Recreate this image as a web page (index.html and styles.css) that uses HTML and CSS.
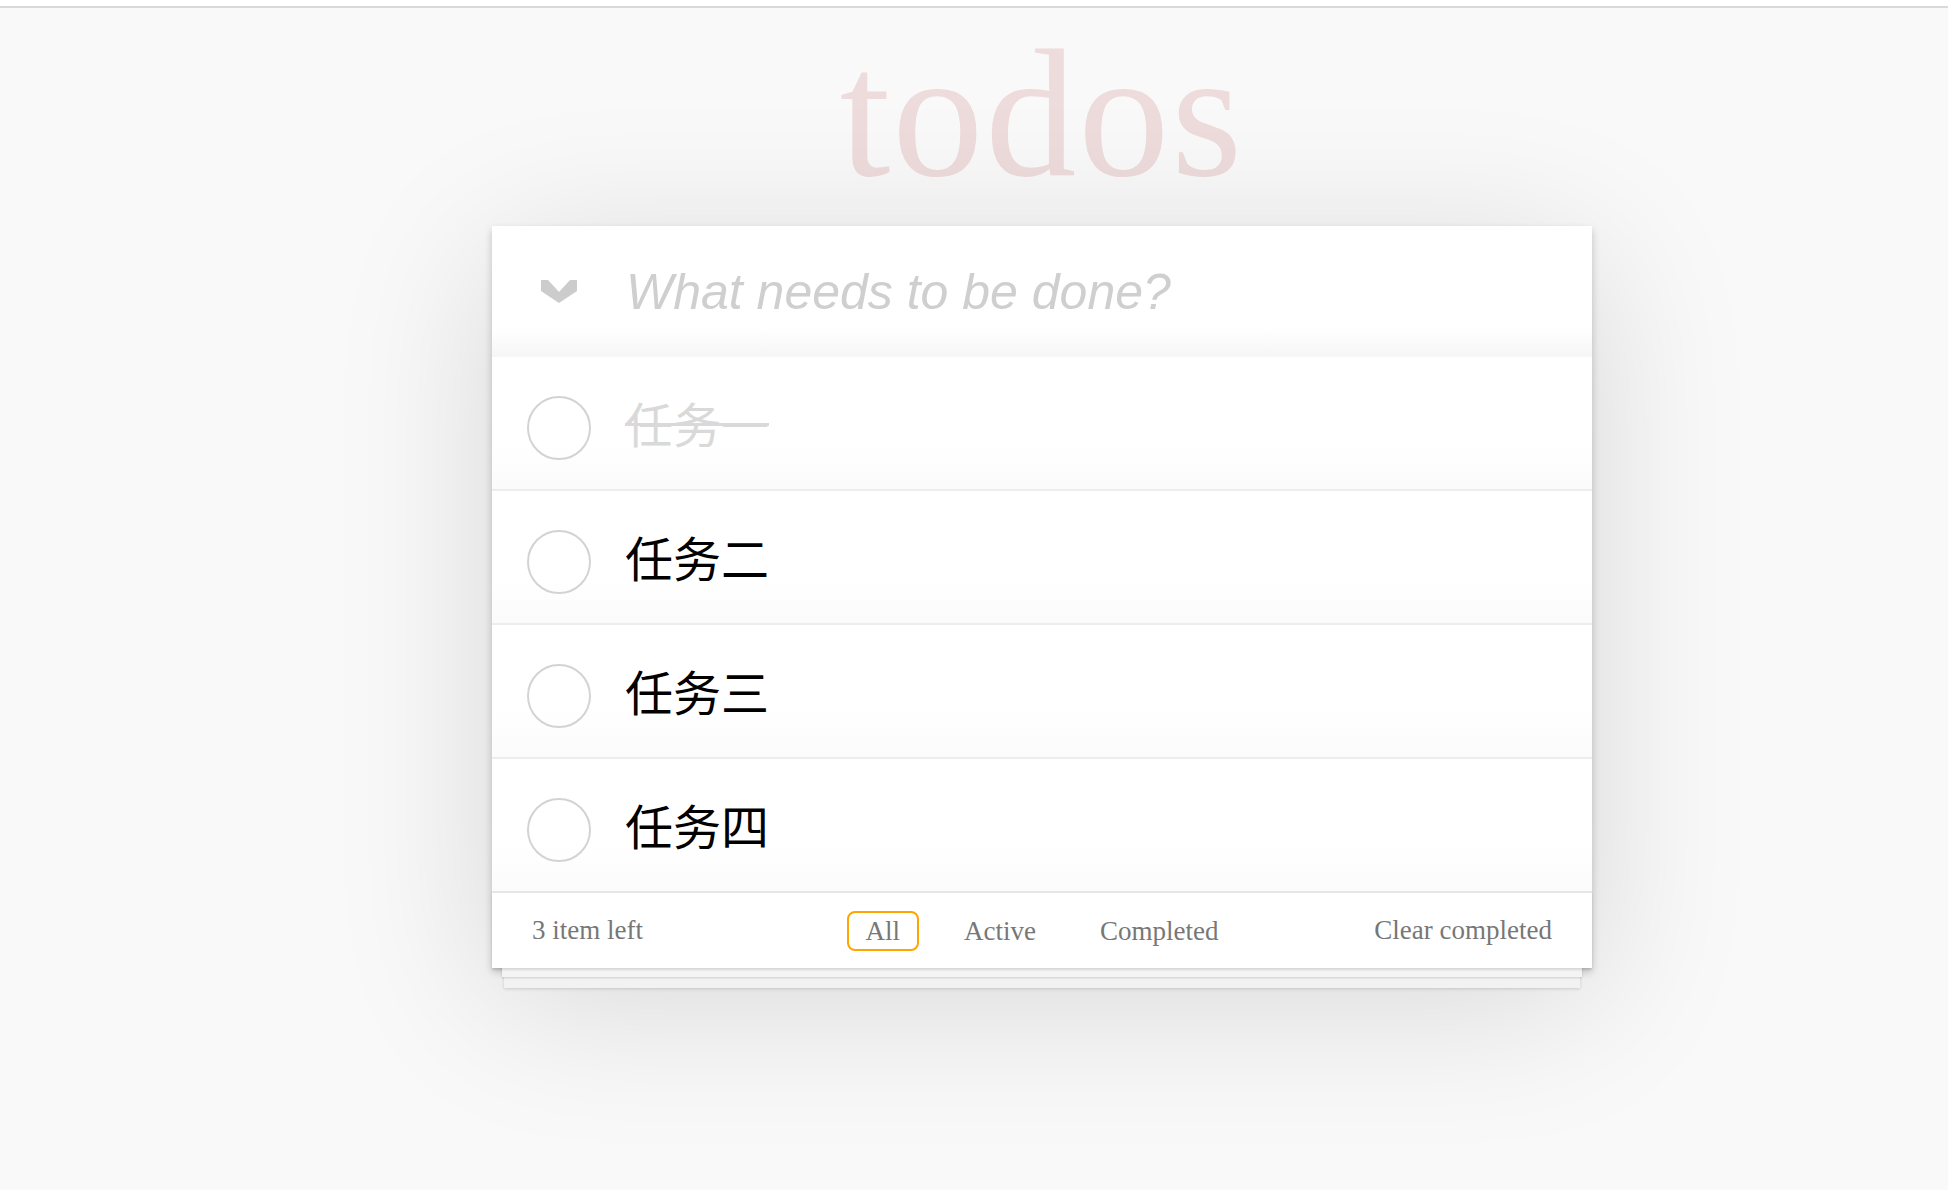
FILE: index.html
```html
<!DOCTYPE html>
<html lang="zh">
<head>
<meta charset="utf-8">
<title>todos</title>
<link rel="stylesheet" href="styles.css">
</head>
<body>
<div class="topbar"></div>
<main class="page">
  <section class="app-wrap">
    <h1 class="title">todos</h1>
    <div class="todoapp">
      <header class="header">
        <span class="toggle-all">
          <svg width="36" height="23" viewBox="0 0 36 23"><polygon points="0,0 7,0 18,12 29,0 36,0 36,11 18,23 0,11" fill="#cccccc"/></svg>
        </span>
        <input class="new-todo" placeholder="What needs to be done?">
      </header>
      <ul class="todo-list">
        <li class="todo completed"><span class="toggle"></span><label class="todo-text">任务一</label></li>
        <li class="todo"><span class="toggle"></span><label class="todo-text">任务二</label></li>
        <li class="todo"><span class="toggle"></span><label class="todo-text">任务三</label></li>
        <li class="todo"><span class="toggle"></span><label class="todo-text">任务四</label></li>
      </ul>
      <footer class="footer">
        <span class="count">3 item left</span>
        <ul class="filters">
          <li><a class="filter selected">All</a></li>
          <li><a class="filter">Active</a></li>
          <li><a class="filter">Completed</a></li>
        </ul>
        <button class="clear">Clear completed</button>
      </footer>
    </div>
  </section>
</main>
</body>
</html>
```

FILE: styles.css
```css
html, body {
  margin: 0;
  padding: 0;
}
body {
  background: #f9f9f9;
  font-family: "Liberation Serif", "Times New Roman", serif;
  color: #777;
  min-height: 1190px;
}
.topbar {
  height: 6px;
  background: #fff;
  border-bottom: 2px solid #d9d9d9;
}
.page {
  display: flex;
  justify-content: center;
  padding-left: 136px;
}
.app-wrap {
  width: 1100px;
  display: flex;
  flex-direction: column;
}
.title {
  margin: 8px 0 14px;
  height: 196px;
  font-size: 182px;
  line-height: 196px;
  font-weight: normal;
  text-align: center;
  letter-spacing: 2px;
  color: rgba(175, 47, 47, 0.15);
}
.todoapp {
  background: #fff;
  box-shadow: 0 4px 8px rgba(0, 0, 0, 0.2), 0 30px 150px rgba(0, 0, 0, 0.14);
}
.header {
  height: 131px;
  display: flex;
  align-items: center;
  background: linear-gradient(#fff 78%, #f6f6f6);
}
.toggle-all {
  width: 134px;
  display: flex;
  justify-content: center;
}
.toggle-all svg {
  display: block;
}
.new-todo {
  flex: 1;
  min-width: 0;
  border: 0;
  outline: 0;
  padding: 0;
  background: transparent;
  font: italic 50px "Liberation Sans", Arial, sans-serif;
  color: #4d4d4d;
}
.new-todo::placeholder {
  color: #cfcfcf;
}
.todo-list {
  list-style: none;
  margin: 0;
  padding: 0;
}
.todo {
  height: 132px;
  display: flex;
  align-items: center;
  border-bottom: 2px solid #ededed;
  background: linear-gradient(#fff 65%, #fbfbfb);
}
.todo:last-child {
  border-bottom: 0;
}
.toggle {
  width: 64px;
  height: 64px;
  box-sizing: border-box;
  border: 2px solid #d3d3d3;
  border-radius: 50%;
  margin: 10px 0 0 35px;
  flex: none;
}
.todo-text {
  margin-left: 34px;
  font-family: "Noto Sans CJK SC", sans-serif;
  font-size: 48px;
  line-height: 1.2;
  color: #000;
}
.completed .todo-text {
  color: #d9d9d9;
  text-decoration: line-through;
  text-decoration-thickness: 3px;
}
.footer {
  height: 75px;
  border-top: 2px solid #e6e6e6;
  padding: 0 40px;
  display: grid;
  grid-template-columns: 1fr auto 1fr;
  align-items: center;
  font-size: 27px;
  color: #777;
  background: #fff;
  box-shadow: 0 2px 2px rgba(0, 0, 0, 0.12),
              0 19px 0 -10px #f4f4f4,
              0 20px 2px -10px rgba(0, 0, 0, 0.15),
              0 32px 0 -12px #f2f2f2,
              0 33px 3px -12px rgba(0, 0, 0, 0.15);
}
.count {
  justify-self: start;
}
.filters {
  list-style: none;
  margin: 0;
  padding: 0;
  display: flex;
  gap: 26px;
}
.filter {
  display: block;
  height: 40px;
  box-sizing: border-box;
  line-height: 36px;
  padding: 0 17px;
  border: 2px solid transparent;
  border-radius: 8px;
  color: #777;
  text-decoration: none;
}
.filter.selected {
  border-color: #ffa500;
}
.clear {
  justify-self: end;
  background: none;
  border: 0;
  padding: 0;
  font: inherit;
  color: #777;
}
```
